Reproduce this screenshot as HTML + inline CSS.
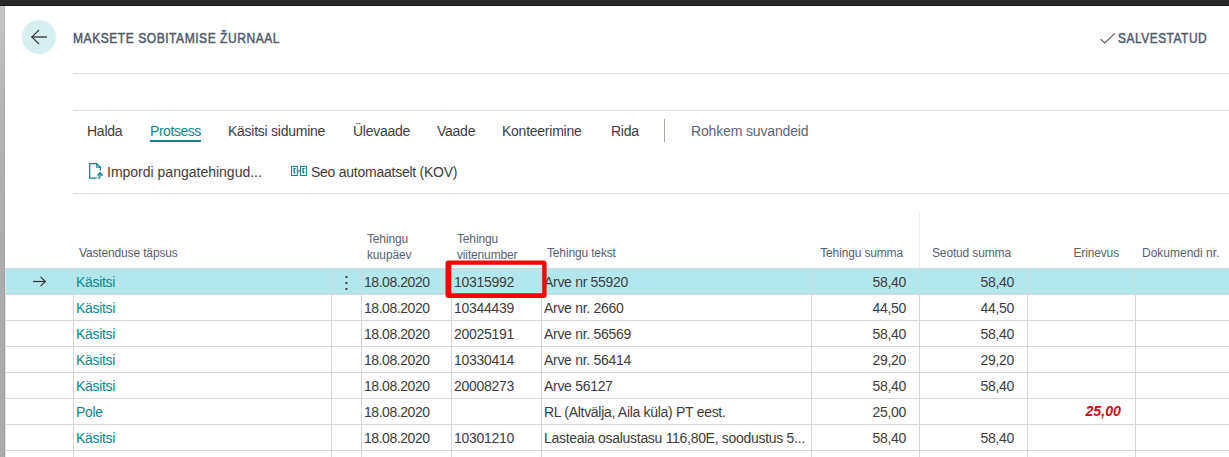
<!DOCTYPE html>
<html><head><meta charset="utf-8">
<style>
html,body{margin:0;padding:0;}
body{width:1229px;height:457px;overflow:hidden;position:relative;background:#fff;font-family:"Liberation Sans",sans-serif;}
.a{position:absolute;white-space:nowrap;}
.topbar{left:0;top:0;width:1229px;height:5px;background:#282828;border-bottom:1px solid #1b1b1b;}
.strip{left:0;top:6px;width:4px;height:451px;border-right:1px solid rgba(0,0,0,0.05);background:linear-gradient(to bottom,#c5c5c5 0px,#b5b5b5 100px,#acacac 260px,#ababab 451px);}
.hl{position:absolute;height:1px;background:#dcdce2;}
.hl.g{background:#d6d7dd;}
.vl{position:absolute;width:1px;background:#d6d7dd;}
.title{font-weight:400;font-size:14px;color:#4d586a;-webkit-text-stroke:0.45px #4d586a;letter-spacing:0.6px;line-height:16px;transform-origin:0 0;}
.act{font-size:14px;letter-spacing:-0.25px;color:#3d3d3d;line-height:16px;}
.th{font-size:12px;letter-spacing:-0.15px;color:#586273;line-height:16px;}
.td{font-size:14px;letter-spacing:-0.3px;color:#3d3d3d;line-height:16px;}
.teal{color:#0f858c;}
.r{text-align:right;}
.ls45{letter-spacing:-0.45px;}
.red{font-weight:700;font-style:italic;color:#d60a12;letter-spacing:0;font-size:14.2px;margin-top:-1px;}
</style></head><body>
<div class="a topbar"></div>
<div class="a strip"></div>

<div class="a" style="left:22px;top:20px;width:34px;height:34px;border-radius:50%;background:#d8eff1;"></div>
<svg class="a" style="left:0;top:0" width="80" height="80">
  <path d="M47 37 L31.5 37" stroke="#555" stroke-width="1.6" fill="none"/>
  <path d="M39 30 L31.8 37 L39 44" stroke="#333" stroke-width="1.05" fill="none"/>
</svg>

<div class="a title" style="left:73px;top:30px;transform:scaleX(0.862);">MAKSETE SOBITAMISE ŽURNAAL</div>

<svg class="a" style="left:1095px;top:25px" width="30" height="25">
  <path d="M5.7 14.2 L9.8 17.9 L19.8 8.3" stroke="#4d586a" stroke-width="1.1" fill="none"/>
</svg>
<div class="a title" style="left:1118px;top:30px;transform:scaleX(0.852);">SALVESTATUD</div>

<div class="hl" style="left:73px;top:73px;width:1156px;"></div>
<div class="hl" style="left:73px;top:110px;width:1156px;"></div>

<div class="a act" style="left:87px;top:123px;">Halda</div>
<div class="a act teal ls45" style="left:150px;top:123px;">Protsess</div>
<div class="a act" style="left:228px;top:123px;">Käsitsi sidumine</div>
<div class="a act" style="left:353px;top:123px;">Ülevaade</div>
<div class="a act" style="left:437px;top:123px;">Vaade</div>
<div class="a act" style="left:502px;top:123px;">Konteerimine</div>
<div class="a act" style="left:611px;top:123px;">Rida</div>
<div class="a" style="left:150px;top:140px;width:51px;height:2px;background:#00838a;"></div>
<div class="a" style="left:664px;top:119px;width:1px;height:23px;background:#a0a8b4;"></div>
<div class="a act" style="left:691px;top:123px;color:#5b6577;letter-spacing:-0.15px;">Rohkem suvandeid</div>

<svg class="a" style="left:86px;top:160px" width="22" height="22">
  <path d="M10.8 18.2 L3.7 18.2 L3.7 3.7 L10.7 3.7 L14.4 7.3 L14.4 10.6" stroke="#0f858c" stroke-width="1.25" fill="none"/>
  <path d="M10.7 3.7 L10.7 7.3 L14.4 7.3" stroke="#0f858c" stroke-width="1.1" fill="none"/>
  <path d="M12.2 18.2 Q14 18.2 14 16.2 L14 13.8" stroke="#0f858c" stroke-width="1.3" fill="none"/>
  <path d="M11.6 15.8 L14 12.6 L16.6 15.8" stroke="#0f858c" stroke-width="1.5" fill="none"/>
</svg>
<div class="a act" style="left:107px;top:164px;letter-spacing:0;">Impordi pangatehingud...</div>

<svg class="a" style="left:288px;top:162px" width="22" height="18">
  <rect x="3.6" y="4.4" width="5.7" height="9.1" stroke="#0f858c" stroke-width="1.05" fill="none"/>
  <rect x="12.5" y="4.4" width="5.9" height="9.1" stroke="#0f858c" stroke-width="1.05" fill="none"/>
  <path d="M9.8 8.5 L12 8.5 M9.8 9.9 L12 9.9" stroke="#0f858c" stroke-width="0.8" fill="none"/>
  <path d="M5.1 6.4 L8 6.4 M6.5 6.4 L6.5 10.5 M5.2 8 L6.5 8 M5.2 9.5 L6.5 9.5" stroke="#0f858c" stroke-width="0.9" fill="none"/>
  <path d="M5.1 10.2 L8 10.2 L6.5 12 Z" fill="#0f858c"/>
  <path d="M14 6.4 L16.9 6.4 M15.4 6.4 L15.4 10.5 M14.1 8 L15.4 8 M14.1 9.5 L15.4 9.5" stroke="#0f858c" stroke-width="0.9" fill="none"/>
  <path d="M14 10.2 L16.9 10.2 L15.4 12 Z" fill="#0f858c"/>
</svg>
<div class="a act" style="left:311px;top:164px;">Seo automaatselt (KOV)</div>

<div class="hl" style="left:73px;top:193px;width:1156px;"></div>

<div class="a" style="left:919px;top:212px;width:1px;height:56px;background:#ececf0;"></div>
<div class="a th" style="left:79px;top:245px;">Vastenduse täpsus</div>
<div class="a th" style="left:367px;top:231px;">Tehingu<br>kuupäev</div>
<div class="a th" style="left:457px;top:231px;">Tehingu<br>viitenumber</div>
<div class="a th" style="left:547px;top:245px;">Tehingu tekst</div>
<div class="a th r" style="right:326px;top:245px;">Tehingu summa</div>
<div class="a th" style="left:932px;top:245px;">Seotud summa</div>
<div class="a th r" style="right:110px;top:245px;">Erinevus</div>
<div class="a th" style="left:1142px;top:245px;letter-spacing:0;">Dokumendi nr.</div>

<div class="a" style="left:5px;top:269px;width:1224px;height:25px;background:#b2e8ec;"></div>
<div class="hl g" style="left:5px;top:268px;width:1224px;"></div>
<div class="hl g" style="left:5px;top:294px;width:1224px;"></div>
<div class="hl g" style="left:5px;top:320px;width:1224px;"></div>
<div class="hl g" style="left:5px;top:346px;width:1224px;"></div>
<div class="hl g" style="left:5px;top:372px;width:1224px;"></div>
<div class="hl g" style="left:5px;top:398px;width:1224px;"></div>
<div class="hl g" style="left:5px;top:424px;width:1224px;"></div>
<div class="hl g" style="left:5px;top:450px;width:1224px;"></div>
<div class="vl" style="left:73px;top:268px;height:189px;"></div>
<div class="vl" style="left:331px;top:268px;height:189px;"></div>
<div class="vl" style="left:361px;top:268px;height:189px;"></div>
<div class="vl" style="left:451px;top:268px;height:189px;"></div>
<div class="vl" style="left:541px;top:268px;height:189px;"></div>
<div class="vl" style="left:811px;top:268px;height:189px;"></div>
<div class="vl" style="left:919px;top:268px;height:189px;"></div>
<div class="vl" style="left:1027px;top:268px;height:189px;"></div>
<div class="vl" style="left:1135px;top:268px;height:189px;"></div>
<div class="vl" style="left:5px;top:268px;height:189px;background:#dde0e5;"></div>

<svg class="a" style="left:0;top:268px" width="60" height="26">
  <path d="M33 13.5 L45.5 13.5" stroke="#333" stroke-width="1.25" fill="none"/>
  <path d="M40.5 8.8 L45.4 13.5 L40.5 18.2" stroke="#333" stroke-width="1.05" fill="none"/>
</svg>
<svg class="a" style="left:340px;top:270px" width="14" height="24">
  <circle cx="6.4" cy="7" r="1.1" fill="#222"/>
  <circle cx="6.4" cy="13" r="1.1" fill="#222"/>
  <circle cx="6.4" cy="19" r="1.1" fill="#222"/>
</svg>

<div class="a td teal" style="left:76px;top:274px;">Käsitsi</div>
<div class="a td" style="left:364px;top:274px;letter-spacing:-0.45px;">18.08.2020</div>
<div class="a td" style="left:454px;top:274px;">10315992</div>
<div class="a td" style="left:544px;top:274px;">Arve nr 55920</div>
<div class="a td r" style="right:323px;top:274px;">58,40</div>
<div class="a td r" style="right:215px;top:274px;">58,40</div>
<div class="a td teal" style="left:76px;top:300px;">Käsitsi</div>
<div class="a td" style="left:364px;top:300px;letter-spacing:-0.45px;">18.08.2020</div>
<div class="a td" style="left:454px;top:300px;">10344439</div>
<div class="a td" style="left:544px;top:300px;">Arve nr. 2660</div>
<div class="a td r" style="right:323px;top:300px;">44,50</div>
<div class="a td r" style="right:215px;top:300px;">44,50</div>
<div class="a td teal" style="left:76px;top:326px;">Käsitsi</div>
<div class="a td" style="left:364px;top:326px;letter-spacing:-0.45px;">18.08.2020</div>
<div class="a td" style="left:454px;top:326px;">20025191</div>
<div class="a td" style="left:544px;top:326px;">Arve nr. 56569</div>
<div class="a td r" style="right:323px;top:326px;">58,40</div>
<div class="a td r" style="right:215px;top:326px;">58,40</div>
<div class="a td teal" style="left:76px;top:352px;">Käsitsi</div>
<div class="a td" style="left:364px;top:352px;letter-spacing:-0.45px;">18.08.2020</div>
<div class="a td" style="left:454px;top:352px;">10330414</div>
<div class="a td" style="left:544px;top:352px;">Arve nr. 56414</div>
<div class="a td r" style="right:323px;top:352px;">29,20</div>
<div class="a td r" style="right:215px;top:352px;">29,20</div>
<div class="a td teal" style="left:76px;top:378px;">Käsitsi</div>
<div class="a td" style="left:364px;top:378px;letter-spacing:-0.45px;">18.08.2020</div>
<div class="a td" style="left:454px;top:378px;">20008273</div>
<div class="a td" style="left:544px;top:378px;">Arve 56127</div>
<div class="a td r" style="right:323px;top:378px;">58,40</div>
<div class="a td r" style="right:215px;top:378px;">58,40</div>
<div class="a td teal" style="left:76px;top:404px;">Pole</div>
<div class="a td" style="left:364px;top:404px;letter-spacing:-0.45px;">18.08.2020</div>
<div class="a td" style="left:544px;top:404px;">RL (Altvälja, Aila küla) PT eest.</div>
<div class="a td r" style="right:323px;top:404px;">25,00</div>
<div class="a td r red" style="right:108px;top:404px;">25,00</div>
<div class="a td teal" style="left:76px;top:430px;">Käsitsi</div>
<div class="a td" style="left:364px;top:430px;letter-spacing:-0.45px;">18.08.2020</div>
<div class="a td" style="left:454px;top:430px;">10301210</div>
<div class="a td" style="left:544px;top:430px;">Lasteaia osalustasu 116,80E, soodustus 5...</div>
<div class="a td r" style="right:323px;top:430px;">58,40</div>
<div class="a td r" style="right:215px;top:430px;">58,40</div>

<svg class="a" style="left:0;top:0" width="600" height="320">
  <path fill="#ff0000" fill-rule="evenodd" d="M448.5 260.5 H543.6 Q546.6 260.5 546.6 263.5 V294.9 Q546.6 297.9 543.6 297.9 H448.5 Q445.5 297.9 445.5 294.9 V263.5 Q445.5 260.5 448.5 260.5 Z M452.3 264.8 Q451.3 264.8 451.3 265.8 V292.3 Q451.3 293.3 452.3 293.3 H541.2 Q542.2 293.3 542.2 292.3 V265.8 Q542.2 264.8 541.2 264.8 Z"/>
</svg>

</body></html>
